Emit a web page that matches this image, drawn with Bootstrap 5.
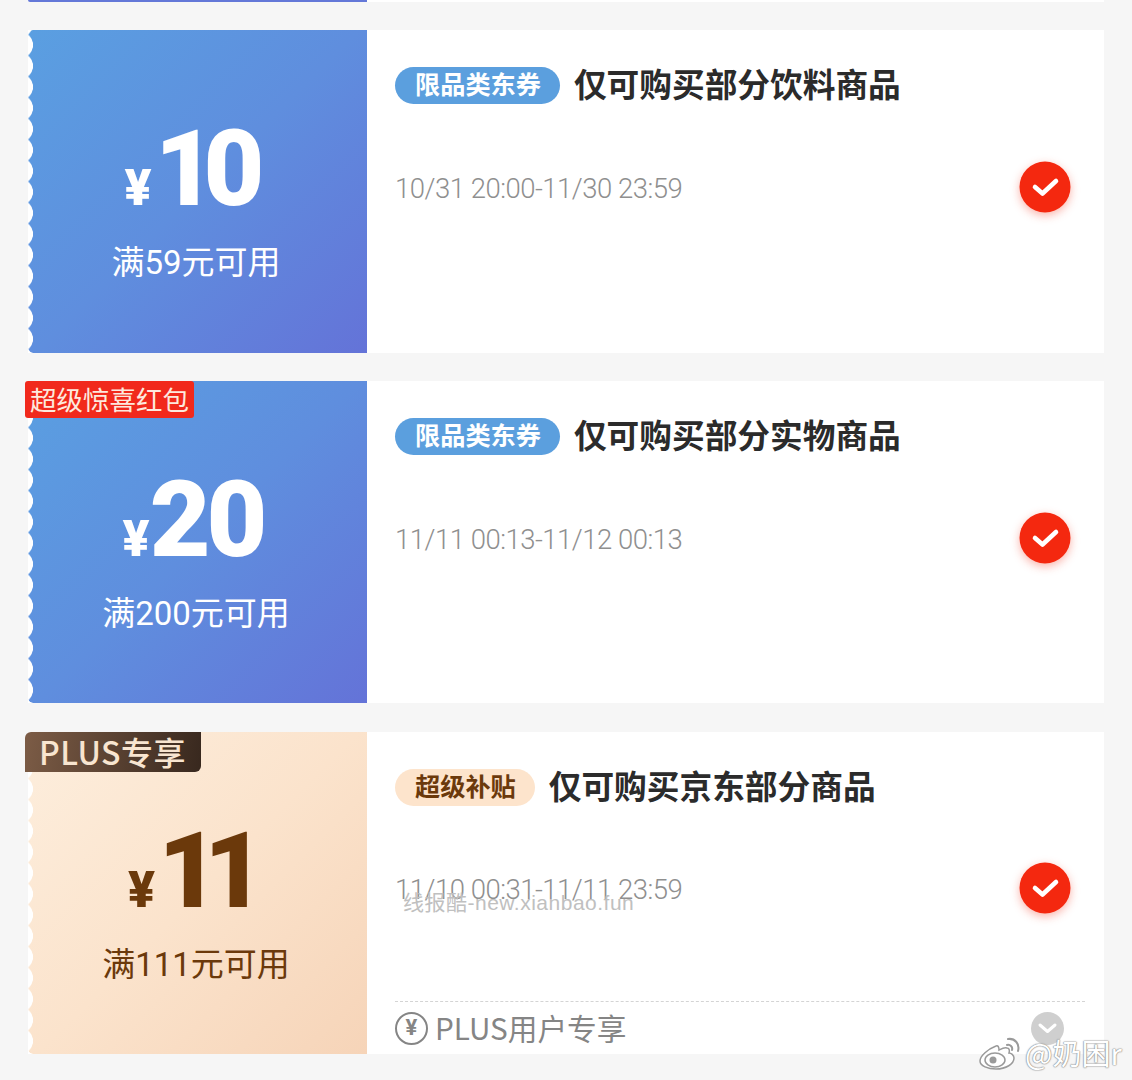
<!DOCTYPE html>
<html lang="zh">
<head>
<meta charset="utf-8">
<title>券</title>
<link rel="stylesheet" href="https://cdn.jsdelivr.net/npm/bootstrap@5.3.0/dist/css/bootstrap.min.css">
<style>
html,body{height:1080px;overflow:hidden}
body{background:#f6f6f6;font-family:"Noto Sans CJK SC","Noto Sans",sans-serif;position:relative}
.sheet{gap:28px;padding:0 28px}
.sliver{height:2px;background:#fff;border-radius:0 0 0 4px;overflow:hidden}
.sliver-stub{width:339px;background:#6478d8}
.ticket{height:323px;background:#fff}
.ticket-short{height:322px}
.ticket-b{height:322px;margin-top:1px}
.stub{width:339px;flex:none;position:relative;color:#fff}
.stub::before{content:"";position:absolute;inset:0;background:linear-gradient(135deg,#5a9fe1 0%,#5f8ede 50%,#6473d8 100%);border-radius:5px 0 0 5px;
 -webkit-mask:radial-gradient(circle at -8.5px 50%,transparent 13.2px,#000 13.7px) 0 4.5px/6px 21px repeat-y,linear-gradient(#000,#000) right/calc(100% - 6px) 100% no-repeat;
 mask:radial-gradient(circle at -8.5px 50%,transparent 13.2px,#000 13.7px) 0 4.5px/6px 21px repeat-y,linear-gradient(#000,#000) right/calc(100% - 6px) 100% no-repeat}
.stub-gold{color:#6b390b}
.stub-gold::before{background:linear-gradient(135deg,#fdeedd 0%,#fbe3cc 50%,#f6d4b8 100%)}
.stub-body{position:relative;padding-top:81px;margin-left:-3px}
.amount{height:118px;align-items:flex-end;justify-content:center;line-height:1}
.yen{font:900 50px/1 Roboto,sans-serif;margin-bottom:16px}
.digits{font:900 105px/118px Roboto,sans-serif}
.amt-ten .yen{margin-right:3px}
.amt-ten .digits{letter-spacing:-12px;margin-right:15px}
.amt-twenty .yen{margin-right:0}
.amt-twenty .digits{letter-spacing:-4px;margin-right:6px}
.amt-eleven .yen{margin-right:3px}
.amt-eleven .digits{letter-spacing:-15px;margin-right:14px}
.cond{font-size:33px;line-height:48px;margin-top:7px;text-align:center}
.cond span{font-family:Roboto,sans-serif;font-size:33px}
.flag{position:absolute;left:-3px;top:0;color:#fde9de;white-space:nowrap;line-height:35px;height:37px;font-size:26.5px;padding:0 5px;background:#f1291c;border-radius:3px;z-index:2}
.flag-plus{background:linear-gradient(100deg,#7c5c46,#38281e);color:#f8e5d0;height:40px;line-height:39px;font-size:32px;letter-spacing:.5px;padding:0 15px 0 14px;border-radius:6px 0 6px 0;font-weight:500}
.pane{padding:36px 33px 0 28px;min-width:0}
.title-row{height:38px;gap:14px}
.pill{background:#5b9fde;color:#fff;font-size:25.2px;font-weight:700;line-height:33px;padding:0 19px 4px 20px;border-radius:19px;white-space:nowrap}
.pill-gold{background:#fde4cc;color:#6b390b}
.ticket-title{font-size:32.7px;font-weight:700;color:#2b2b2b;line-height:34px;padding-bottom:4px;white-space:nowrap}
.date-row{height:52px;margin-top:57px}
.ticket-b .date-row{margin-top:56px}
.date{font:300 27.5px/52px Roboto,sans-serif;color:#8f8f8f;letter-spacing:-.5px;padding-top:4px}
.tick{width:52px;height:52px;display:block;filter:drop-shadow(0 3px 5px rgba(240,40,15,.35))}
.foot{height:53px;border-top:1px dashed #d4d4d4;margin-right:-14px;padding-right:21px;color:#858585;font-size:29.7px;line-height:1}
.coin{width:33px;height:33px;border:2px solid #858585;border-radius:50%;font:700 22px/1 Roboto,sans-serif;margin-right:7px;flex:none}
.chev{width:33px;height:33px;display:block}
.mark-site{position:absolute;left:403px;top:889px;font-size:21px;letter-spacing:.5px;line-height:28px;color:#c0c0c0;white-space:nowrap;font-family:"Liberation Sans","Noto Sans CJK SC",sans-serif}
.mark-weibo{position:absolute;left:978px;top:1034px;gap:3px;color:#fff;font-size:29px;line-height:36px;white-space:nowrap;text-shadow:0 0 1px #8a8a8a,0 0 1px #8a8a8a,0 0 2px #9a9a9a}
</style>
</head>
<body>
<main class="sheet d-flex flex-column">
  <div class="sliver d-flex"><div class="sliver-stub"></div></div>

  <section class="ticket d-flex">
    <div class="stub">
      <div class="stub-body">
        <div class="amount amt-ten d-flex"><span class="yen">¥</span><span class="digits">10</span></div>
        <div class="cond">满<span>59</span>元可用</div>
      </div>
    </div>
    <div class="pane flex-grow-1 d-flex flex-column">
      <div class="title-row d-flex align-items-center"><span class="pill">限品类东券</span><span class="ticket-title">仅可购买部分饮料商品</span></div>
      <div class="date-row d-flex justify-content-between align-items-center"><span class="date">10/31 20:00-11/30 23:59</span>
        <svg class="tick" viewBox="0 0 52 52"><circle cx="26" cy="26" r="25.5" fill="#f4280f"/><path d="M16 26l7.5 6.5L37 20" fill="none" stroke="#fff" stroke-width="4.6" stroke-linecap="round" stroke-linejoin="round"/></svg></div>
    </div>
  </section>

  <section class="ticket ticket-short d-flex">
    <div class="stub">
      <span class="flag">超级惊喜红包</span>
      <div class="stub-body">
        <div class="amount amt-twenty d-flex"><span class="yen">¥</span><span class="digits">20</span></div>
        <div class="cond">满<span>200</span>元可用</div>
      </div>
    </div>
    <div class="pane flex-grow-1 d-flex flex-column">
      <div class="title-row d-flex align-items-center"><span class="pill">限品类东券</span><span class="ticket-title">仅可购买部分实物商品</span></div>
      <div class="date-row d-flex justify-content-between align-items-center"><span class="date">11/11 00:13-11/12 00:13</span>
        <svg class="tick" viewBox="0 0 52 52"><circle cx="26" cy="26" r="25.5" fill="#f4280f"/><path d="M16 26l7.5 6.5L37 20" fill="none" stroke="#fff" stroke-width="4.6" stroke-linecap="round" stroke-linejoin="round"/></svg></div>
    </div>
  </section>

  <section class="ticket ticket-b d-flex">
    <div class="stub stub-gold">
      <span class="flag flag-plus">PLUS专享</span>
      <div class="stub-body">
        <div class="amount amt-eleven d-flex"><span class="yen">¥</span><span class="digits">11</span></div>
        <div class="cond">满<span>111</span>元可用</div>
      </div>
    </div>
    <div class="pane flex-grow-1 d-flex flex-column">
      <div class="title-row d-flex align-items-center"><span class="pill pill-gold">超级补贴</span><span class="ticket-title">仅可购买京东部分商品</span></div>
      <div class="date-row d-flex justify-content-between align-items-center"><span class="date">11/10 00:31-11/11 23:59</span>
        <svg class="tick" viewBox="0 0 52 52"><circle cx="26" cy="26" r="25.5" fill="#f4280f"/><path d="M16 26l7.5 6.5L37 20" fill="none" stroke="#fff" stroke-width="4.6" stroke-linecap="round" stroke-linejoin="round"/></svg></div>
      <div class="foot mt-auto d-flex align-items-center justify-content-between">
        <div class="foot-text d-flex align-items-center"><span class="coin d-flex align-items-center justify-content-center">¥</span>PLUS用户专享</div>
        <svg class="chev" viewBox="0 0 33 33"><circle cx="16.5" cy="16.5" r="16.5" fill="#cfcfcf"/><path d="M9 13l7.5 6.5L24 13" fill="none" stroke="#fff" stroke-width="3" stroke-linecap="round" stroke-linejoin="round"/></svg>
      </div>
    </div>
  </section>
</main>

<div class="mark-site">线报酷-new.xianbao.fun</div>
<div class="mark-weibo d-flex align-items-center">
  <svg width="44" height="36" viewBox="0 0 44 36"><path d="M18 12C10 15 2 22 2 27c0 5 8 8 16 8 10 0 18-5 18-11 0-3-3-5-5-5 1-3 0-5-2-5-3-1-6 1-8 2 0-3-1-5-3-4z" fill="#fff" stroke="#9a9a9a" stroke-width="1.5"/><ellipse cx="17" cy="26" rx="10" ry="7" fill="#fff" stroke="#9a9a9a" stroke-width="1.5"/><circle cx="15" cy="26" r="3.5" fill="#9a9a9a"/><path d="M29 11c3-1 6 2 5 5M30 5c7-1 12 5 10 12" fill="none" stroke="#9a9a9a" stroke-width="2" stroke-linecap="round"/></svg>
  <span>@奶困r</span>
</div>
<script src="https://cdn.jsdelivr.net/npm/bootstrap@5.3.0/dist/js/bootstrap.bundle.min.js"></script>
</body>
</html>
